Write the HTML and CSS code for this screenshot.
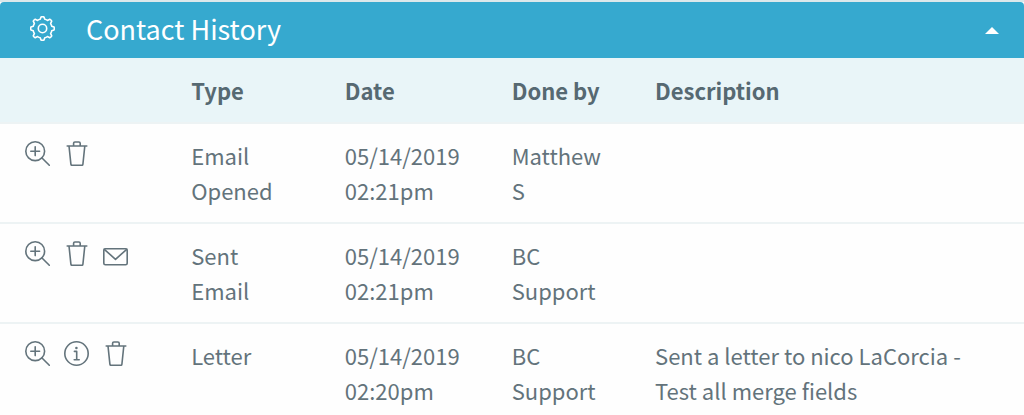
FILE: index.html
```html
<!DOCTYPE html>
<html lang="en">
<head>
    <meta charset="UTF-8">
    <meta name="viewport" content="width=device-width, initial-scale=1.0">
    <title>Contact History</title>
    <link rel="stylesheet" href="styles.css">
</head>
<body>
    <!-- shared icons -->
    <svg class="icon-defs" aria-hidden="true">
        <symbol id="icon-gear" viewBox="0 0 25 25">
            <g transform="translate(12.5 12.5)">
                <path d="M-1.4-11.6Q0-12 1.4-11.6L2.3-9.2Q3.6-9 4.9-8.1L7.3-9.2Q8.6-8.6 9.2-7.3L8.1-4.9Q9-3.6 9.2-2.3L11.6-1.4Q12 0 11.6 1.4L9.2 2.3Q9 3.6 8.1 4.9L9.2 7.3Q8.6 8.6 7.3 9.2L4.9 8.1Q3.6 9 2.3 9.2L1.4 11.6Q0 12-1.4 11.6L-2.3 9.2Q-3.6 9-4.9 8.1L-7.3 9.2Q-8.6 8.6-9.2 7.3L-8.1 4.9Q-9 3.6-9.2 2.3L-11.6 1.4Q-12 0-11.6-1.4L-9.2-2.3Q-9-3.6-8.1-4.9L-9.2-7.3Q-8.6-8.6-7.3-9.2L-4.9-8.1Q-3.6-9-2.3-9.2Z"/>
                <circle r="4.2"/>
            </g>
        </symbol>
        <symbol id="icon-zoom" viewBox="0 0 25 25">
            <circle cx="10.2" cy="10.2" r="9.4"/>
            <path d="M10.2 5.8v8.8M5.8 10.2h8.8M17 17l7.3 7.3"/>
        </symbol>
        <symbol id="icon-trash" viewBox="0 0 25 25">
            <path d="M3.2 5h19.6M5 5l1.9 18.2q.1 1.1 1.2 1.1h9.6q1.1 0 1.2-1.1L20.8 5M9.6 5V2.3q0-1.3 1.3-1.3h4q1.3 0 1.3 1.3V5"/>
        </symbol>
        <symbol id="icon-mail" viewBox="0 0 25 25">
            <rect x=".8" y="7.8" width="23.4" height="16" rx="1.6"/>
            <path d="M1.3 8.3l11.2 10 11.2-10"/>
        </symbol>
        <symbol id="icon-info" viewBox="0 0 25 25">
            <circle cx="12.5" cy="12.5" r="11.7"/>
            <path d="M10.4 10.4h2.3v8.3M10.2 18.7h5"/>
            <circle class="dot" cx="12.4" cy="7" r="1.3"/>
        </symbol>
    </svg>

    <section class="panel">
        <header class="panel-header">
            <div class="panel-title">
                <button class="icon-button" type="button" aria-label="Settings"><svg class="icon"><use href="#icon-gear"/></svg></button>
                <h1>Contact History</h1>
            </div>
            <button class="icon-button" type="button" aria-label="Collapse">
                <svg class="caret" viewBox="0 0 14 7"><path d="M7 0l7 7H0z"/></svg>
            </button>
        </header>

        <table class="history">
            <thead>
                <tr>
                    <th class="col-actions"></th>
                    <th class="col-type" scope="col">Type</th>
                    <th class="col-date" scope="col">Date</th>
                    <th class="col-user" scope="col">Done by</th>
                    <th scope="col">Description</th>
                </tr>
            </thead>
            <tbody>
                <tr>
                    <td>
                        <div class="actions">
                            <button class="icon-button" type="button" aria-label="View"><svg class="icon"><use href="#icon-zoom"/></svg></button>
                            <button class="icon-button" type="button" aria-label="Delete"><svg class="icon"><use href="#icon-trash"/></svg></button>
                        </div>
                    </td>
                    <td>Email Opened</td>
                    <td>05/14/2019 02:21pm</td>
                    <td>Matthew S</td>
                    <td></td>
                </tr>
                <tr>
                    <td>
                        <div class="actions">
                            <button class="icon-button" type="button" aria-label="View"><svg class="icon"><use href="#icon-zoom"/></svg></button>
                            <button class="icon-button" type="button" aria-label="Delete"><svg class="icon"><use href="#icon-trash"/></svg></button>
                            <button class="icon-button" type="button" aria-label="Email"><svg class="icon"><use href="#icon-mail"/></svg></button>
                        </div>
                    </td>
                    <td>Sent Email</td>
                    <td>05/14/2019 02:21pm</td>
                    <td>BC Support</td>
                    <td></td>
                </tr>
                <tr>
                    <td>
                        <div class="actions">
                            <button class="icon-button" type="button" aria-label="View"><svg class="icon"><use href="#icon-zoom"/></svg></button>
                            <button class="icon-button" type="button" aria-label="Info"><svg class="icon"><use href="#icon-info"/></svg></button>
                            <button class="icon-button" type="button" aria-label="Delete"><svg class="icon"><use href="#icon-trash"/></svg></button>
                        </div>
                    </td>
                    <td>Letter</td>
                    <td>05/14/2019 02:20pm</td>
                    <td>BC Support</td>
                    <td>Sent a letter to nico LaCorcia - Test all merge fields</td>
                </tr>
            </tbody>
        </table>
    </section>
</body>
</html>
```
FILE: styles.css
```css
body {
    margin: 0;
    background-color: #fefefe;
    color: #63737b;
    font-family: "Noto Sans CJK SC", "Open Sans", sans-serif;
    font-size: 22px;
    line-height: 35px;
}

.icon-defs {
    display: none;
}

.panel {
    border-top: 2px solid #dce8eb;
}

.panel-header {
    display: flex;
    align-items: center;
    justify-content: space-between;
    padding: 0 25px 0 30px;
    background-color: #36a9cf;
    color: #ffffff;
    border-radius: 4px 4px 0 0;
}

.panel-title {
    display: flex;
    align-items: center;
    gap: 31px;
    padding: 9px 0 12px;
}

h1 {
    margin: 0;
    font-size: 27px;
    font-weight: 400;
}

.icon-button {
    display: block;
    padding: 0;
    border: none;
    background: none;
    color: inherit;
    cursor: pointer;
}

.icon {
    display: block;
    width: 25px;
    height: 25px;
    fill: none;
    stroke: currentColor;
    stroke-width: 1.6;
    stroke-linecap: round;
    stroke-linejoin: round;
}

.dot {
    fill: currentColor;
    stroke: none;
}

.caret {
    display: block;
    width: 14px;
    height: 7px;
    fill: currentColor;
}

.history {
    width: 100%;
    table-layout: fixed;
    border-collapse: separate;
    border-spacing: 0;
}

th, td {
    padding: 14px 40px 14px 12px;
    border-bottom: 2px solid #edf3f4;
    text-align: left;
    vertical-align: top;
}

th {
    padding-top: 15px;
    background-color: #e9f5f8;
    color: #566972;
    font-weight: 700;
}

td:first-child {
    padding: 17px 0 14px 25px;
}

tbody tr:last-child td {
    border-bottom: none;
}

.col-actions {
    width: 17.5%;
    box-sizing: border-box;
}

.col-type {
    width: 15%;
    box-sizing: border-box;
}

.col-date {
    width: 16.3%;
    box-sizing: border-box;
}

.col-user {
    width: 14%;
    box-sizing: border-box;
}

.actions {
    display: flex;
    gap: 14px;
}
```
